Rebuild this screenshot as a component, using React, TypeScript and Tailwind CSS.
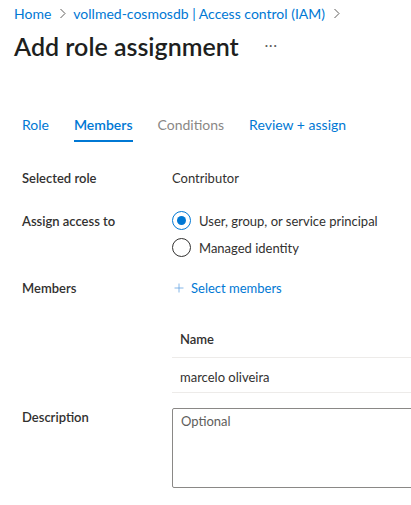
import { Plus } from "lucide-react"

const font = { fontFamily: 'Lato, "Noto Sans", sans-serif' }

function Chevron() {
  return (
    <svg width="7" height="11" viewBox="0 0 7 11" className="shrink-0">
      <path d="M1.5 1 L6 5.5 L1.5 10" fill="none" stroke="#605e5c" strokeWidth="1" />
    </svg>
  )
}

function Radio({ checked, label }: { checked?: boolean; label: string }) {
  return (
    <div className="flex h-[27px] items-center gap-[8px]">
      <span
        className={`flex h-[19px] w-[19px] items-center justify-center rounded-full border ${
          checked ? "border-[#0078d4]" : "border-[#323130]"
        }`}
      >
        {checked && <span className="h-[9px] w-[9px] rounded-full bg-[#0078d4]" />}
      </span>
      <span>{label}</span>
    </div>
  )
}

export default function App() {
  const tabs = [
    { name: "Role", cls: "text-[#0078d4]" },
    { name: "Members", cls: "text-[#0078d4] font-semibold", active: true },
    { name: "Conditions", cls: "text-[#8a8886]" },
    { name: "Review + assign", cls: "text-[#0078d4]" },
  ]

  return (
    <div className="h-[505px] w-[411px] overflow-hidden bg-white text-[13px] text-[#323130]" style={font}>
      <div className="pl-[14px]">
        <div className="flex h-[26px] items-center text-[14px] text-[#0078d4]">
          <span>Home</span>
          <span className="ml-[8px] mr-[7px]"><Chevron /></span>
          <span>vollmed-cosmosdb | Access control (IAM)</span>
          <span className="mx-[8px]"><Chevron /></span>
        </div>
        <div className="mt-[4px] flex h-[32px] items-center">
          <h1 className="text-[25px] font-semibold leading-[32px] text-[#201f1e]">Add role assignment</h1>
          <span className="ml-[26px] text-[13px] tracking-[1px] text-[#605e5c]">···</span>
        </div>
      </div>

      <div className="pl-[22px]">
        <div className="mt-[53px] flex gap-[25px] text-[14px]">
          {tabs.map((t) => (
            <div key={t.name} className="flex flex-col">
              <span className={`h-[20px] leading-[20px] ${t.cls}`}>{t.name}</span>
              <span className={`mt-[5px] h-[2px] ${t.active ? "bg-[#0078d4]" : "bg-transparent"}`} />
            </div>
          ))}
        </div>

        <div className="mt-[26px] grid grid-cols-[150px_1fr] leading-[20px]">
          <div className="font-semibold">Selected role</div>
          <div>Contributor</div>

          <div className="mt-[19px] pt-[4px] font-semibold">Assign access to</div>
          <div className="mt-[19px]">
            <Radio checked label="User, group, or service principal" />
            <Radio label="Managed identity" />
          </div>

          <div className="mt-[17px] font-semibold">Members</div>
          <div className="mt-[17px] flex items-center gap-[5px] text-[#0078d4]">
            <Plus size={14} strokeWidth={1.3} className="text-[#5ea0e0]" />
            <span>Select members</span>
          </div>

          <div />
          <div className="mt-[23px]">
            <div className="flex h-[37px] items-center border-b border-[#edebe9] pl-[8px] font-semibold">Name</div>
            <div className="flex h-[35px] items-center border-b border-[#edebe9] pl-[8px] pt-[4px]">marcelo oliveira</div>
          </div>

          <div className="mt-[14px] font-semibold">Description</div>
          <div className="mt-[15px]">
            <div className="h-[80px] w-[300px] rounded-[2px] border border-[#8a8886] px-[8px] py-[2px] text-[#605e5c]">
              Optional
            </div>
          </div>
        </div>
      </div>
    </div>
  )
}
